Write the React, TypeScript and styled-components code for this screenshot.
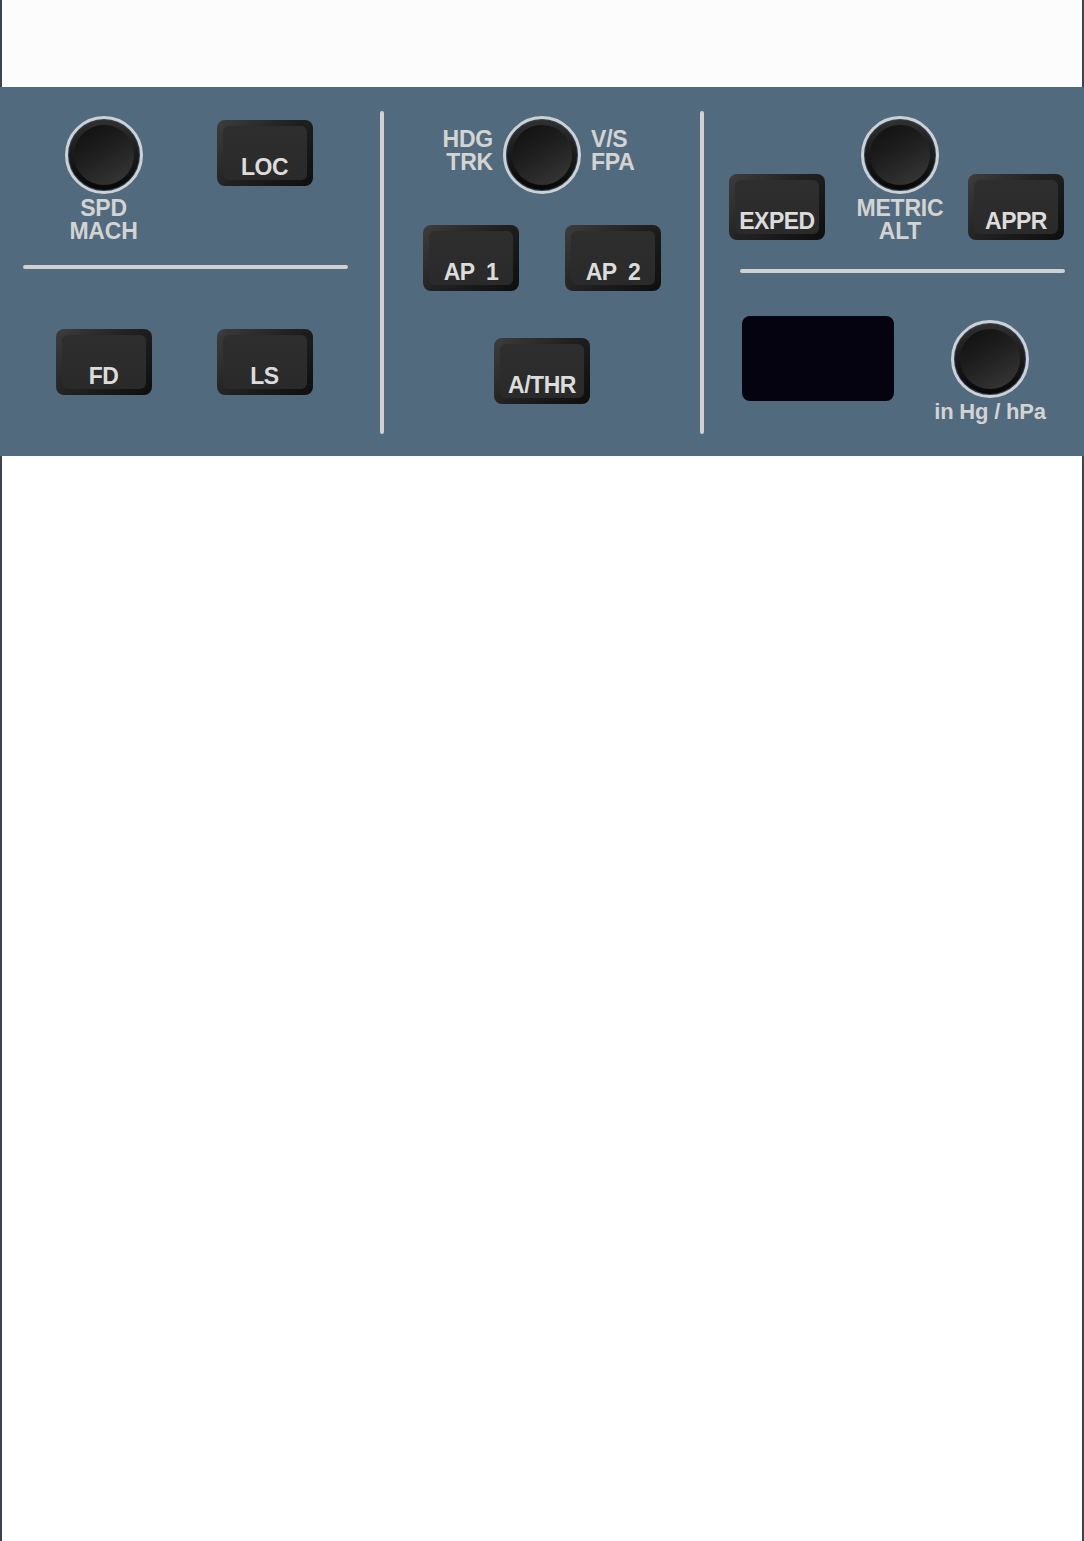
import React from "react";
import styled, { createGlobalStyle } from "styled-components";

const Global = createGlobalStyle`
  html, body { margin: 0; padding: 0; }
  body { font-family: "Liberation Sans", Arial, sans-serif; }
`;

const Frame = styled.div`
  min-height: 100vh;
  display: flex;
  flex-direction: column;
`;

const Margin = styled.div<{ $fill?: boolean; $bg: string }>`
  box-sizing: border-box;
  border-left: 2px solid #3a4350;
  border-right: 2px solid #3a4350;
  background: ${(p) => p.$bg};
  height: ${(p) => (p.$fill ? "auto" : "87px")};
  flex: ${(p) => (p.$fill ? "1" : "none")};
`;

const Panel = styled.div`
  height: 369px;
  background: #526a7e;
  display: flex;
  align-items: stretch;
`;

const Divider = styled.div`
  width: 4px;
  margin: 24px 0 22px;
  border-radius: 2px;
  background: #d0d0d0;
`;

const Column = styled.div<{ $w?: number }>`
  box-sizing: border-box;
  width: ${(p) => (p.$w ? `${p.$w}px` : "auto")};
  flex: ${(p) => (p.$w ? "none" : "1")};
  padding-top: 29px;
  display: flex;
  flex-direction: column;
`;

const Rule = styled.div<{ $left: number; $top: number }>`
  width: 325px;
  height: 4px;
  border-radius: 2px;
  background: #d0d0d0;
  margin-left: ${(p) => p.$left}px;
  margin-top: ${(p) => p.$top}px;
`;

const TwoCols = styled.div<{ $top?: number }>`
  display: grid;
  grid-template-columns: 161px 161px;
  padding-left: 23px;
  margin-top: ${(p) => p.$top ?? 0}px;
  justify-items: center;
  align-items: start;
`;

const KnobCell = styled.div<{ $shift?: number }>`
  display: flex;
  flex-direction: column;
  align-items: center;
  padding-left: ${(p) => p.$shift ?? 0}px;
`;

const KnobRing = styled.div<{ $top?: number }>`
  box-sizing: border-box;
  width: 78px;
  height: 78px;
  border-radius: 50%;
  border: 3px solid #cdd1d5;
  background: #2f4152;
  padding: 1px;
  margin-top: ${(p) => p.$top ?? 0}px;
  flex: none;
`;

const KnobCap = styled.div`
  position: relative;
  width: 100%;
  height: 100%;
  border-radius: 50%;
  background: linear-gradient(180deg, #303030 0%, #1a1a1a 50%, #080808 100%);
  &::after {
    content: "";
    position: absolute;
    inset: 5px;
    border-radius: 50%;
    background: linear-gradient(150deg, #0f0f0f 0%, #1f1f1f 45%, #3a3a3a 100%);
  }
`;

const Label = styled.div<{ $align?: string; $size?: number; $top?: number }>`
  color: #d3d3d3;
  font-weight: 700;
  font-size: ${(p) => p.$size ?? 23}px;
  line-height: 23px;
  letter-spacing: -0.2px;
  text-align: ${(p) => p.$align ?? "center"};
  white-space: nowrap;
  margin-top: ${(p) => p.$top ?? 0}px;
`;

const Key = styled.div<{ $top?: number }>`
  box-sizing: border-box;
  width: 96px;
  height: 66px;
  padding: 6px;
  border-radius: 8px;
  background: linear-gradient(135deg, #3d3d3d 0%, #222 45%, #0e0e0e 100%);
  margin-top: ${(p) => p.$top ?? 0}px;
  flex: none;
`;

const KeyFace = styled.div`
  box-sizing: border-box;
  height: 100%;
  border-radius: 6px;
  background: linear-gradient(180deg, #2e2e2e 0%, #2a2a2a 100%);
  display: flex;
  align-items: flex-end;
  justify-content: center;
  padding-bottom: 1px;
  color: #dcdcdc;
  font-weight: 700;
  font-size: 23px;
  line-height: 24px;
  letter-spacing: -0.5px;
  white-space: pre;
`;

const HdgRow = styled.div`
  display: grid;
  grid-template-columns: 1fr 78px 1fr;
  column-gap: 10px;
  align-items: start;
`;

const Pair = styled.div<{ $top: number }>`
  display: flex;
  justify-content: center;
  gap: 46px;
  margin-top: ${(p) => p.$top}px;
`;

const FcuRow = styled.div`
  display: grid;
  grid-template-columns: 96px 143px 96px;
  padding-left: 25px;
  align-items: start;
`;

const BaroRow = styled.div`
  display: grid;
  grid-template-columns: 152px 120px;
  column-gap: 36px;
  padding-left: 38px;
  margin-top: 43px;
  align-items: start;
`;

const Display = styled.div`
  height: 85px;
  border-radius: 8px;
  background: #05030f;
`;

const Knob = ({ top }: { top?: number }) => (
  <KnobRing $top={top}>
    <KnobCap />
  </KnobRing>
);

const Button = ({ label, top }: { label: string; top?: number }) => (
  <Key $top={top}>
    <KeyFace>{label}</KeyFace>
  </Key>
);

const Lines = ({
  lines,
  align,
  size,
  top,
}: {
  lines: string[];
  align?: string;
  size?: number;
  top?: number;
}) => (
  <Label $align={align} $size={size} $top={top}>
    {lines.map((l) => (
      <div key={l}>{l}</div>
    ))}
  </Label>
);

export default function App() {
  return (
    <Frame>
      <Global />
      <Margin $bg="#fcfcfc" />
      <Panel>
        <Column $w={380}>
          <TwoCols>
            <KnobCell>
              <Knob />
              <Lines lines={["SPD", "MACH"]} top={3} />
            </KnobCell>
            <Button label="LOC" top={4} />
          </TwoCols>
          <Rule $left={23} $top={22} />
          <TwoCols $top={60}>
            <Button label="FD" />
            <Button label="LS" />
          </TwoCols>
        </Column>
        <Divider />
        <Column $w={316}>
          <HdgRow>
            <Lines lines={["HDG", "TRK"]} align="right" top={12} />
            <Knob />
            <Lines lines={["V/S", "FPA"]} align="left" top={12} />
          </HdgRow>
          <Pair $top={31}>
            <Button label={"AP  1"} />
            <Button label={"AP  2"} />
          </Pair>
          <Pair $top={47}>
            <Button label="A/THR" />
          </Pair>
        </Column>
        <Divider />
        <Column>
          <FcuRow>
            <Button label="EXPED" top={58} />
            <KnobCell $shift={7}>
              <Knob />
              <Lines lines={["METRIC", "ALT"]} top={3} />
            </KnobCell>
            <Button label="APPR" top={58} />
          </FcuRow>
          <Rule $left={36} $top={26} />
          <BaroRow>
            <Display />
            <KnobCell>
              <Knob top={4} />
              <Lines lines={["in Hg / hPa"]} size={22} top={2} />
            </KnobCell>
          </BaroRow>
        </Column>
      </Panel>
      <Margin $fill $bg="#ffffff" />
    </Frame>
  );
}
